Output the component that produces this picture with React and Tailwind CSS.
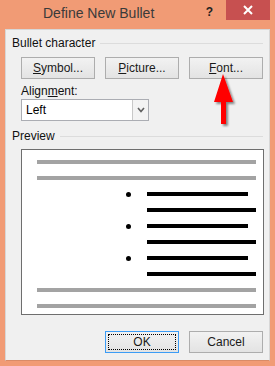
import React from 'react';

const font = { fontFamily: '"Liberation Sans", Arial, sans-serif' };

function PushButton({ children, focused = false }) {
  return (
    <div
      className={`w-[74px] h-[22px] flex items-center justify-center text-[12px] text-[#1a1a1a] bg-gradient-to-b from-[#f2f2f2] to-[#e3e3e3] border ${
        focused ? 'border-[#3c9cf5] p-[2px]' : 'border-[#adadad]'
      }`}
    >
      {focused ? (
        <div className="w-full h-full flex items-center justify-center border border-dotted border-black">
          {children}
        </div>
      ) : (
        children
      )}
    </div>
  );
}

function GroupLabel({ children }) {
  return (
    <div className="flex items-center h-[16px] pl-[6px] pr-[6px]">
      <span className="text-[12px] text-[#111] leading-none">{children}</span>
      <div className="flex-1 h-px bg-[#dcdcdc] ml-[5px]" />
    </div>
  );
}

function Bar({ gray = false, width }) {
  return <div className={`h-[4px] ${gray ? 'bg-[#a3a3a3]' : 'bg-black'} ${width}`} />;
}

function BulletRow({ bullet, long }) {
  return (
    <div className="flex items-center h-[4px]">
      <div className="w-[125px] h-[4px] flex items-center">
        {bullet && <div className="ml-[104px] w-[5px] h-[5px] rounded-full bg-black" />}
      </div>
      <Bar width={long ? 'w-[109px]' : 'w-[101px]'} />
    </div>
  );
}

export default function App() {
  return (
    <div className="w-[275px] h-[366px] bg-[#f19b75] flex flex-col relative overflow-hidden" style={font}>
      {/* title bar */}
      <div className="h-[29px] flex items-start shrink-0">
        <span className="ml-[43px] mt-[6px] text-[14px] text-[#3a3a3a] leading-none">Define New Bullet</span>
        <div className="flex-1" />
        <span className="mt-[6px] mr-[13px] text-[12px] font-bold text-[#222] leading-none">?</span>
        <div className="w-[44px] h-[20px] mr-[5px] bg-[#c75050] flex items-center justify-center">
          <svg width="10" height="10" viewBox="0 0 10 10">
            <path d="M1 1 L9 9 M9 1 L1 9" stroke="white" strokeWidth="2" />
          </svg>
        </div>
      </div>

      {/* dialog body */}
      <div className="ml-[5px] w-[265px] h-[332px] bg-[#f0f0f0] border border-[#d7d7d7] border-b-[#d98b68] flex flex-col pt-[5px]">
        <GroupLabel>Bullet character</GroupLabel>

        <div className="flex gap-[10px] pl-[15px] mt-[6px]">
          <PushButton><span><u>S</u>ymbol...</span></PushButton>
          <PushButton><span><u>P</u>icture...</span></PushButton>
          <PushButton><span><u>F</u>ont...</span></PushButton>
        </div>

        <div className="h-[16px] mt-[4px] pl-[15px] flex items-center text-[12px] text-[#111]">
          <span>Align<u>m</u>ent:</span>
        </div>

        <div className="ml-[15px] w-[128px] h-[22px] bg-white border border-[#abadb3] flex">
          <div className="flex-1 flex items-center pl-[4px] text-[12px] text-black">Left</div>
          <div className="w-[16px] h-full bg-[#f3f3f3] border-l border-[#c8c8c8] flex items-center justify-center">
            <svg width="8" height="6" viewBox="0 0 8 6">
              <path d="M1 1 L4 4.5 L7 1" fill="none" stroke="#606060" strokeWidth="1.6" />
            </svg>
          </div>
        </div>

        <div className="mt-[7px]">
          <GroupLabel>Preview</GroupLabel>
        </div>

        <div className="ml-[15px] mt-[5px] w-[243px] h-[166px] bg-white border border-[#6e6e6e] flex flex-col gap-[12px] pt-[10px]">
          <div className="pl-[15px]"><Bar gray width="w-[219px]" /></div>
          <div className="pl-[15px]"><Bar gray width="w-[219px]" /></div>
          <BulletRow bullet />
          <BulletRow long />
          <BulletRow bullet />
          <BulletRow long />
          <BulletRow bullet />
          <BulletRow long />
          <div className="pl-[15px]"><Bar gray width="w-[219px]" /></div>
          <div className="pl-[15px]"><Bar gray width="w-[219px]" /></div>
        </div>

        <div className="flex gap-[10px] pl-[99px] mt-[16px]">
          <PushButton focused>OK</PushButton>
          <PushButton>Cancel</PushButton>
        </div>
      </div>

      {/* red arrow callout */}
      <svg className="absolute left-[205px] top-[70px]" width="40" height="62" viewBox="0 0 40 62">
        <defs>
          <filter id="sh" x="-50%" y="-50%" width="200%" height="200%">
            <feDropShadow dx="2" dy="2" stdDeviation="1.2" floodColor="#000" floodOpacity="0.45" />
          </filter>
        </defs>
        <path d="M18 4 L28 32 L21 32 L21 54 L16 54 L16 32 L9 32 Z" fill="#ff0000" filter="url(#sh)" />
      </svg>
    </div>
  );
}
